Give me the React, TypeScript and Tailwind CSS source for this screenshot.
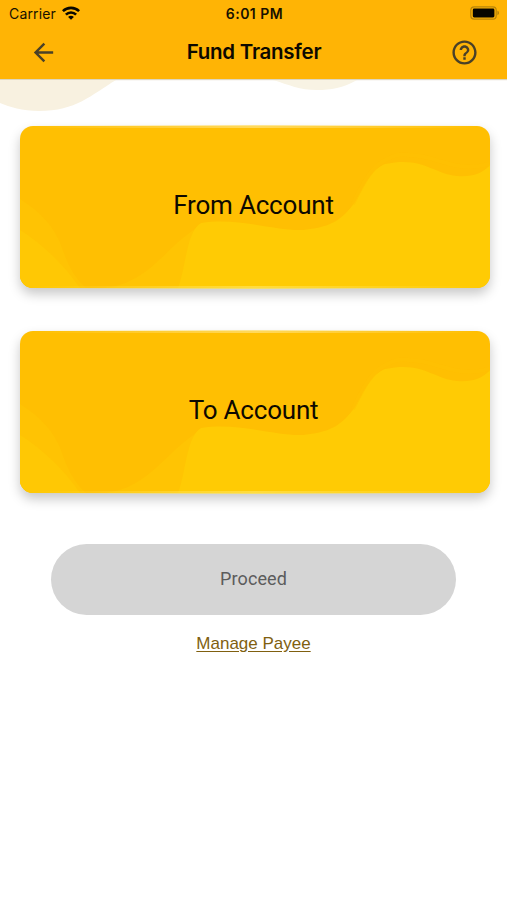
import { useState } from "react";
import { MdArrowBack, MdHelpOutline } from "react-icons/md";

type AccountCardProps = {
  label: string;
  onSelect: () => void;
};

function StatusBar() {
  return (
    <div className="grid h-[27px] grid-cols-3 items-center pl-[9px] pr-[7px] font-['Inter',sans-serif] text-[#171100]">
      <div className="flex items-center gap-[6px]">
        <span className="text-[14px] tracking-[0.15px]">Carrier</span>
        <svg className="-mt-px h-[14px] w-[18px]" viewBox="0 0 18 14" fill="none" stroke="#0a0800" strokeWidth="2.6">
          <path d="M0.9 5.2a11.5 11.5 0 0 1 16.2 0" />
          <path d="M3.9 8.6a7.2 7.2 0 0 1 10.2 0" />
          <path d="M9 13.8L6.1 10.9a4 4 0 0 1 5.8 0Z" fill="#0a0800" stroke="none" />
        </svg>
      </div>
      <span className="text-center text-[14px] font-semibold tracking-[0.5px]">6:01 PM</span>
      <svg className="-mt-px h-[14px] w-[30px] justify-self-end" viewBox="0 0 30 14" fill="none">
        <rect x="0.8" y="0.9" width="25.4" height="12.2" rx="3.4" stroke="#b98509" strokeWidth="1.2" />
        <rect x="2.8" y="2.6" width="21.6" height="8.8" rx="1.4" fill="#080600" />
        <path d="M27.5 4.8c1.8.6 1.8 3.8 0 4.4Z" fill="#a97a08" />
      </svg>
    </div>
  );
}

function AccountCard({ label, onSelect }: AccountCardProps) {
  return (
    <button
      onClick={onSelect}
      className="relative flex h-[162px] w-full items-center justify-center rounded-[13px] bg-[#ffbf02] pb-[5px] pr-[3px] shadow-[0_6px_12px_rgba(0,0,0,0.22)]"
    >
      {/* Wave pattern */}
      <svg className="absolute inset-0 h-full w-full rounded-[13px]" viewBox="0 0 470 162" preserveAspectRatio="none">
        <path d="M0 73C22 87 34 101 41 119C48 140 55 152 66 162H0Z" fill="#ffc303" />
        <path d="M85 162C132 156 145 119 183 98V162Z" fill="#ffc403" />
        <path d="M0 104C24 119 44 139 60 162H0Z" fill="#ffc804" />
        <path
          d="M158 162C166 142 166 106 181 97C219 91 254 105 283 104C314 101 323 92 335 76C344 61 350 44 365 38C402 30 412 47 437 50C452 51 462 48 470 39V162Z"
          fill="#ffcb04"
        />
        <path d="M333 78C346 50 356 34 378 29C420 27 429 48 470 38" fill="none" stroke="#ffc202" strokeWidth="4" opacity="0.5" />
      </svg>
      {/* Soft top and bottom edges */}
      <span className="absolute -top-px left-3 right-3 h-[3px] bg-linear-to-r from-transparent via-[#ffdf72] to-transparent opacity-80" />
      <span className="absolute -bottom-px left-3 right-3 h-[3px] bg-linear-to-r from-transparent via-[#ffe14e] to-transparent opacity-80" />
      <span className="relative text-[26px] leading-8 tracking-[-0.2px] text-[#0d0900]">{label}</span>
    </button>
  );
}

export default function App() {
  const [selected, setSelected] = useState<string[]>([]);

  const select = (name: string) => {
    if (!selected.includes(name)) setSelected([...selected, name]);
  };

  return (
    <div className="h-[900px] w-[507px] overflow-hidden bg-white font-['Roboto',sans-serif]">
      <header className="h-[79px] bg-[#ffb405] shadow-[0_1px_1px_rgba(120,90,0,0.25)]">
        <StatusBar />
        <div className="flex h-[50px] items-center justify-between pl-[29px] pr-[28px]">
          <button aria-label="Back">
            <MdArrowBack className="h-[29px] w-[29px] text-[#4a4128]" />
          </button>
          <h1 className="pt-px font-['Inter',sans-serif] text-[20.5px] font-semibold tracking-[-0.26px] text-[#0d0900]">
            Fund Transfer
          </h1>
          <button aria-label="Help">
            <MdHelpOutline className="h-[29px] w-[29px] text-[#4a4128]" />
          </button>
        </div>
      </header>

      <main className="relative">
        {/* Background waves */}
        <svg className="absolute left-0 top-[1px] h-[34px] w-full" viewBox="0 0 507 34">
          <path d="M0 0H116C91 15 76 31 39 31C22 31 10 27 0 23Z" fill="#f8f1e0" />
          <path d="M273 0H357C343 8 331 10 317 10C300 10 289 5 273 0Z" fill="#f8f3e4" />
        </svg>

        <section className="flex flex-col gap-[43px] pl-5 pr-[17px] pt-[47px]">
          <AccountCard label="From Account" onSelect={() => select("from")} />
          <AccountCard label="To Account" onSelect={() => select("to")} />
        </section>

        <div className="mt-[51px] flex flex-col items-center">
          <button
            disabled={selected.length < 2}
            className="h-[71px] w-[405px] rounded-full bg-[#d5d5d5] pb-[2px] text-[18px] tracking-[0.1px] text-[#5c5c5c]"
          >
            Proceed
          </button>
          <a
            href="#payees"
            className="mt-[17px] font-['Liberation_Sans',sans-serif] text-[17px] leading-6 text-[#806010] underline underline-offset-2"
          >
            Manage Payee
          </a>
        </div>
      </main>
    </div>
  );
}
